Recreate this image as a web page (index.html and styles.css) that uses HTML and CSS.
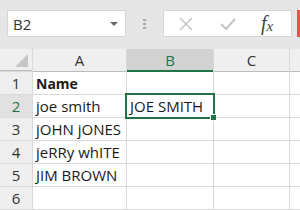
FILE: index.html
```html
<!DOCTYPE html>
<html>
<head>
  <title>Sheet</title>
  <link rel="stylesheet" href="styles.css">
</head>
<body>
  <div class="toolbar">
    <div class="name-box">
      <span>B2</span>
      <span class="drop"></span>
    </div>
    <div class="grip"><i></i><i></i><i></i></div>
    <div class="fx-box">
      <svg class="ico" width="16" height="16" viewBox="0 0 16 16"><path d="M2 2L14 14M14 2L2 14" stroke="#c6c6c6" stroke-width="1.6" fill="none"/></svg>
      <svg class="ico" width="18" height="16" viewBox="0 0 18 16"><path d="M2 8L7 13L16 3" stroke="#c6c6c6" stroke-width="2.2" fill="none"/></svg>
      <span class="fx">f<sub>x</sub></span>
    </div>
    <div class="red-edge"></div>
  </div>

  <div class="sheet">
    <div class="corner"><span class="tri"></span></div>
    <div class="col-head">A</div>
    <div class="col-head sel">B</div>
    <div class="col-head">C</div>
    <div class="col-head"></div>

    <div class="row-head">1</div>
    <div class="cell bold">Name</div>
    <div class="cell"></div>
    <div class="cell"></div>
    <div class="cell"></div>

    <div class="row-head sel">2</div>
    <div class="cell">joe smith</div>
    <div class="cell active">JOE SMITH<span class="handle"></span></div>
    <div class="cell"></div>
    <div class="cell"></div>

    <div class="row-head">3</div>
    <div class="cell">jOHN jONES</div>
    <div class="cell"></div>
    <div class="cell"></div>
    <div class="cell"></div>

    <div class="row-head">4</div>
    <div class="cell">jeRRy whITE</div>
    <div class="cell"></div>
    <div class="cell"></div>
    <div class="cell"></div>

    <div class="row-head">5</div>
    <div class="cell">JIM BROWN</div>
    <div class="cell"></div>
    <div class="cell"></div>
    <div class="cell"></div>

    <div class="row-head">6</div>
    <div class="cell"></div>
    <div class="cell"></div>
    <div class="cell"></div>
    <div class="cell"></div>
  </div>
</body>
</html>
```

FILE: styles.css
```css
body {
  margin: 0;
  width: 300px;
  height: 210px;
  overflow: hidden;
  background: #ffffff;
  font-family: "Open Sans", "Liberation Sans", sans-serif;
}

.toolbar {
  height: 49px;
  background: #e6e6e6;
  display: flex;
  align-items: flex-start;
  padding-top: 10px;
  box-sizing: border-box;
}

.name-box {
  margin-left: 7px;
  width: 119px;
  height: 27px;
  box-sizing: border-box;
  background: #fff;
  border: 1px solid #d6d6d6;
  display: flex;
  align-items: center;
  justify-content: space-between;
  padding: 0 7px 0 5px;
  font-size: 15px;
  color: #333;
}

.drop {
  width: 0;
  height: 0;
  border-left: 4px solid transparent;
  border-right: 4px solid transparent;
  border-top: 4px solid #6a6a6a;
}

.grip {
  width: 37px;
  height: 27px;
  display: flex;
  flex-direction: column;
  align-items: center;
  justify-content: center;
  gap: 2px;
}

.grip i {
  width: 3px;
  height: 2px;
  background: #a8a8a8;
}

.fx-box {
  width: 129px;
  height: 27px;
  box-sizing: border-box;
  background: #fff;
  border: 1px solid #d6d6d6;
  display: flex;
  align-items: center;
  padding-left: 14px;
  gap: 25px;
}

.fx {
  font-family: "Liberation Serif", serif;
  font-style: italic;
  font-size: 20px;
  color: #444;
  margin-left: -1px;
}

.fx sub {
  font-size: 15px;
  vertical-align: -1px;
}

.red-edge {
  margin-left: 5px;
  width: 3px;
  height: 27px;
  background: #e0584a;
}

.sheet {
  display: grid;
  grid-template-columns: 32px 93px 86px 75px 1fr;
  grid-template-rows: repeat(7, 22px);
  gap: 1px;
  background: #d9d9d9;
  border-bottom: 1px solid #d9d9d9;
  font-size: 15px;
}

.corner {
  background: #efefef;
  position: relative;
  border-bottom: 1px solid #bdbdbd;
}

.tri {
  position: absolute;
  right: 4px;
  bottom: 3px;
  width: 0;
  height: 0;
  border-left: 13px solid transparent;
  border-bottom: 13px solid #c6c6c6;
}

.col-head {
  background: #efefef;
  color: #333;
  display: flex;
  align-items: center;
  justify-content: center;
  font-size: 15px;
  border-bottom: 1px solid #bdbdbd;
  margin-bottom: -1px;
}

.col-head.sel {
  background: #d2d2d2;
  color: #217346;
  border-bottom: 2px solid #217346;
}

.row-head {
  background: #efefef;
  color: #333;
  display: flex;
  align-items: center;
  justify-content: center;
  font-size: 15px;
}

.row-head.sel {
  background: #e1e1e1;
  color: #217346;
}

.cell {
  background: #fff;
  color: #1a1a1a;
  display: flex;
  align-items: center;
  padding-left: 3px;
  white-space: nowrap;
}

.bold {
  font-weight: bold;
  font-size: 14px;
}

.active {
  position: relative;
  outline: 2px solid #217346;
  outline-offset: 0;
  z-index: 1;
}

.handle {
  position: absolute;
  right: -4px;
  bottom: -4px;
  width: 5px;
  height: 5px;
  background: #217346;
  border: 1px solid #fff;
}
```
